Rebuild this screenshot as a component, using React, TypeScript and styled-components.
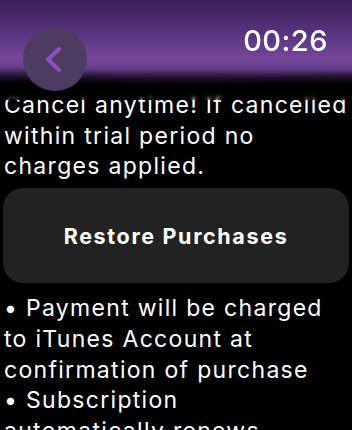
import React from "react";
import styled, { createGlobalStyle } from "styled-components";

const GlobalStyle = createGlobalStyle`
  html, body {
    margin: 0;
    padding: 0;
    background: #000;
    height: 430px;
    overflow: hidden;
  }
  body {
    font-family: "Inter", "Noto Sans", sans-serif;
    color: #fff;
  }
`;

const Screen = styled.div`
  position: relative;
  width: 352px;
  height: 430px;
  overflow: hidden;
  background: #000;
`;

const Content = styled.div`
  padding: 90px 3px 0 3px;
  display: flex;
  flex-direction: column;
`;

const Paragraph = styled.p<{ $gap?: number }>`
  margin: ${(p) => p.$gap ?? 0}px 0 0 1px;
  font-size: 23px;
  line-height: 30.7px;
  font-weight: 400;
  letter-spacing: 1.3px;
  white-space: nowrap;
`;

const RestoreButton = styled.button`
  margin-top: 6px;
  height: 95px;
  border: none;
  border-radius: 20px;
  background: #222222;
  color: #fff;
  font-family: "Inter", "Noto Sans", sans-serif;
  font-size: 21.5px;
  font-weight: 700;
  letter-spacing: 1.65px;
  cursor: pointer;
`;

const Header = styled.div`
  position: absolute;
  top: 0;
  left: 0;
  right: 0;
  height: 100px;
  backdrop-filter: blur(2px);
  background:
    radial-gradient(ellipse 55% 35% at 0% 100%, rgba(0, 0, 0, 0.75), transparent),
    radial-gradient(ellipse 55% 30% at 100% 100%, rgba(0, 0, 0, 0.6), transparent),
    linear-gradient(
      to bottom,
      #3b2159 0px,
      #55317b 30px,
      #744699 58px,
      #683f8f 68px,
      #1e112b 78px,
      #000 85px,
      #000 91px,
      rgba(0, 0, 0, 0) 100px
    );
  display: flex;
  align-items: flex-start;
  justify-content: space-between;
  padding: 0 24px 0 23px;
  box-sizing: border-box;
`;

const BackButton = styled.button`
  margin-top: 27px;
  width: 64px;
  height: 64px;
  border-radius: 50%;
  border: none;
  background: #4e3b61;
  display: flex;
  align-items: center;
  justify-content: center;
  padding: 0 4px 0 0;
  cursor: pointer;
`;

const Clock = styled.div`
  margin-top: 24px;
  font-size: 29px;
  line-height: 34px;
  font-weight: 500;
  letter-spacing: 0.5px;
  color: #fff;
`;

export default function App() {
  return (
    <Screen>
      <GlobalStyle />
      <Content>
        <Paragraph>
          Cancel anytime! If cancelled
          <br />
          within trial period no
          <br />
          charges applied.
        </Paragraph>
        <RestoreButton>Restore Purchases</RestoreButton>
        <Paragraph $gap={10}>
          • Payment will be charged
          <br />
          to iTunes Account at
          <br />
          confirmation of purchase
          <br />
          • Subscription
          <br />
          automatically renews
        </Paragraph>
      </Content>
      <Header>
        <BackButton aria-label="Back">
          <svg width="17" height="27" viewBox="0 0 17 27">
            <polyline
              points="14,3 3,13.5 14,24"
              fill="none"
              stroke="#8e4fc6"
              strokeWidth="4"
              strokeLinecap="round"
              strokeLinejoin="round"
            />
          </svg>
        </BackButton>
        <Clock>00:26</Clock>
      </Header>
    </Screen>
  );
}
